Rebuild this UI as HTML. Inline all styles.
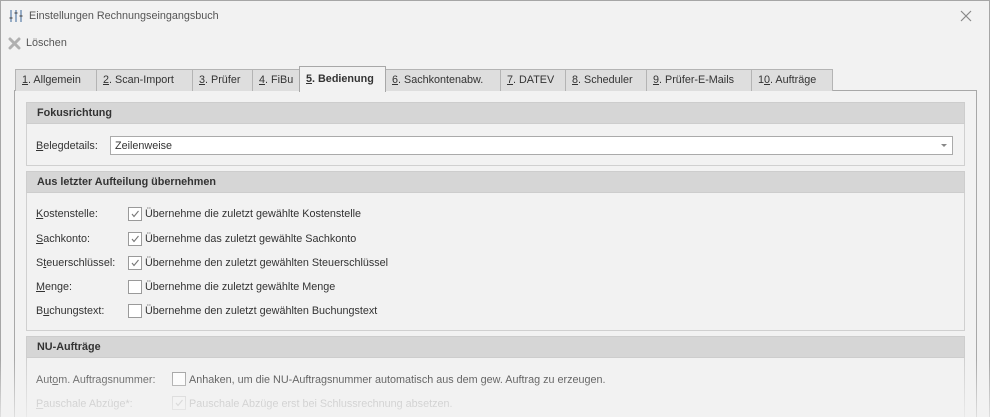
<!DOCTYPE html><html><head><style>
*{box-sizing:border-box;margin:0;padding:0}
html{width:990px;height:417px;overflow:hidden}
body{width:990px;height:417px;overflow:hidden;background:#f2f2f2;font-family:"Liberation Sans",sans-serif;font-size:10.8px;color:#333;position:relative}
.a{position:absolute;white-space:nowrap}
.win{position:absolute;left:0;top:0;width:990px;height:417px;border:1px solid #a6a6a6;border-bottom:none}
.tab{position:absolute;top:69px;height:22px;border:1px solid #b4b4b4;border-bottom:none;background:#dedede;padding:4px 0 0 6px;color:#333}
.tab.act{top:66px;height:26px;background:#f2f2f2;font-weight:bold;border-color:#a8a8a8;padding-top:6px;z-index:2}
.panel{position:absolute;left:14px;top:90px;width:963px;height:340px;border:1px solid #a8a8a8;background:#f2f2f2}
.gh{position:absolute;left:26px;width:939px;height:22px;background:#d6d6d6;border:1px solid #cdcdcd;font-weight:bold;padding:4px 0 0 10px}
.gb{position:absolute;left:26px;width:939px;border:1px solid #d0d0d0;border-top:none}
.cb{position:absolute;width:14px;height:14px;border:1px solid #9a9a9a;background:#fff}
.cb svg{position:absolute;left:1px;top:1px}
u{text-decoration:underline}
.fade{position:absolute;left:0;top:360px;width:990px;height:57px;background:linear-gradient(to bottom,rgba(242,242,242,0),rgba(242,242,242,0.75))}
</style></head><body>
<div class="win"></div>
<svg class="a" style="left:9px;top:9px" width="14" height="14" viewBox="0 0 14 14" fill="none" stroke="#5a7ea8" stroke-width="1.2"><path d="M2 1v12M7 1v12M12 1v12"/><path d="M0.5 9h3M5.5 4h3M10.5 7h3" stroke="#555"/></svg>
<div class="a" style="left:29px;top:10px;color:#555">Einstellungen Rechnungseingangsbuch</div>
<svg class="a" style="left:960px;top:10px" width="12" height="12" viewBox="0 0 12 12" stroke="#888" stroke-width="1.2"><path d="M1 1l10 10M11 1L1 11"/></svg>
<svg class="a" style="left:8px;top:37px" width="13" height="13" viewBox="0 0 13 13" stroke="#b0b0b0" stroke-width="3" stroke-linecap="round"><path d="M2 2l9 9M11 2l-9 9"/></svg>
<div class="a" style="left:26px;top:37px;color:#555">Löschen</div>
<div class="panel"></div>
<div class="tab" style="left:15px;width:82px"><u>1</u>. Allgemein</div>
<div class="tab" style="left:96px;width:97px"><u>2</u>. Scan-Import</div>
<div class="tab" style="left:192px;width:61px"><u>3</u>. Prüfer</div>
<div class="tab" style="left:252px;width:48px"><u>4</u>. FiBu</div>
<div class="tab act" style="left:299px;width:87px"><u>5</u>. Bedienung</div>
<div class="tab" style="left:385px;width:116px"><u>6</u>. Sachkontenabw.</div>
<div class="tab" style="left:500px;width:66px"><u>7</u>. DATEV</div>
<div class="tab" style="left:565px;width:82px"><u>8</u>. Scheduler</div>
<div class="tab" style="left:646px;width:106px"><u>9</u>. Prüfer-E-Mails</div>
<div class="tab" style="left:751px;width:82px">1<u>0</u>. Aufträge</div>

<div class="gh" style="top:102px">Fokusrichtung</div>
<div class="gb" style="top:124px;height:42px"></div>
<div class="a" style="left:36px;top:140px"><u>B</u>elegdetails:</div>
<div class="a" style="left:110px;top:136px;width:843px;height:19px;background:#fff;border:1px solid #aaa;padding:3px 0 0 4px">Zeilenweise</div>
<div class="a" style="left:941px;top:144px;width:0;height:0;border-left:3px solid transparent;border-right:3px solid transparent;border-top:3px solid #888"></div>

<div class="gh" style="top:171px">Aus letzter Aufteilung übernehmen</div>
<div class="gb" style="top:193px;height:138px"></div>

<div class="a" style="left:36px;top:208px"><u>K</u>ostenstelle:</div>
<div class="cb" style="left:128px;top:207px"><svg width="10" height="10" viewBox="0 0 10 10" fill="none" stroke="#777" stroke-width="1.1"><path d="M2 5l2 2.5L8.5 2"/></svg></div>
<div class="a" style="left:145px;top:208px">Übernehme die zuletzt gewählte Kostenstelle</div>
<div class="a" style="left:36px;top:233px"><u>S</u>achkonto:</div>
<div class="cb" style="left:128px;top:232px"><svg width="10" height="10" viewBox="0 0 10 10" fill="none" stroke="#777" stroke-width="1.1"><path d="M2 5l2 2.5L8.5 2"/></svg></div>
<div class="a" style="left:145px;top:233px">Übernehme das zuletzt gewählte Sachkonto</div>
<div class="a" style="left:36px;top:257px">S<u>t</u>euerschlüssel:</div>
<div class="cb" style="left:128px;top:256px"><svg width="10" height="10" viewBox="0 0 10 10" fill="none" stroke="#777" stroke-width="1.1"><path d="M2 5l2 2.5L8.5 2"/></svg></div>
<div class="a" style="left:145px;top:257px">Übernehme den zuletzt gewählten Steuerschlüssel</div>
<div class="a" style="left:36px;top:281px"><u>M</u>enge:</div>
<div class="cb" style="left:128px;top:280px"></div>
<div class="a" style="left:145px;top:281px">Übernehme die zuletzt gewählte Menge</div>
<div class="a" style="left:36px;top:305px">B<u>u</u>chungstext:</div>
<div class="cb" style="left:128px;top:304px"></div>
<div class="a" style="left:145px;top:305px">Übernehme den zuletzt gewählten Buchungstext</div>

<div class="gh" style="top:336px">NU-Aufträge</div>
<div class="gb" style="top:358px;height:70px"></div>
<div class="a" style="left:36px;top:374px;color:#444">Aut<u>o</u>m. Auftragsnummer:</div>
<div class="cb" style="left:172px;top:372px"></div>
<div class="a" style="left:189px;top:374px">Anhaken, um die NU-Auftragsnummer automatisch aus dem gew. Auftrag zu erzeugen.</div>
<div class="a" style="left:36px;top:398px;color:#aaa"><u>P</u>auschale Abzüge*:</div>
<div class="cb" style="left:172px;top:396px;border-color:#ccc;background:#f4f4f4"><svg width="10" height="10" viewBox="0 0 10 10" fill="none" stroke="#bbb" stroke-width="1.1"><path d="M2 5l2 2.5L8.5 2"/></svg></div>
<div class="a" style="left:189px;top:398px;color:#aaa">Pauschale Abzüge erst bei Schlussrechnung absetzen.</div>
<div class="fade"></div>
</body></html>
